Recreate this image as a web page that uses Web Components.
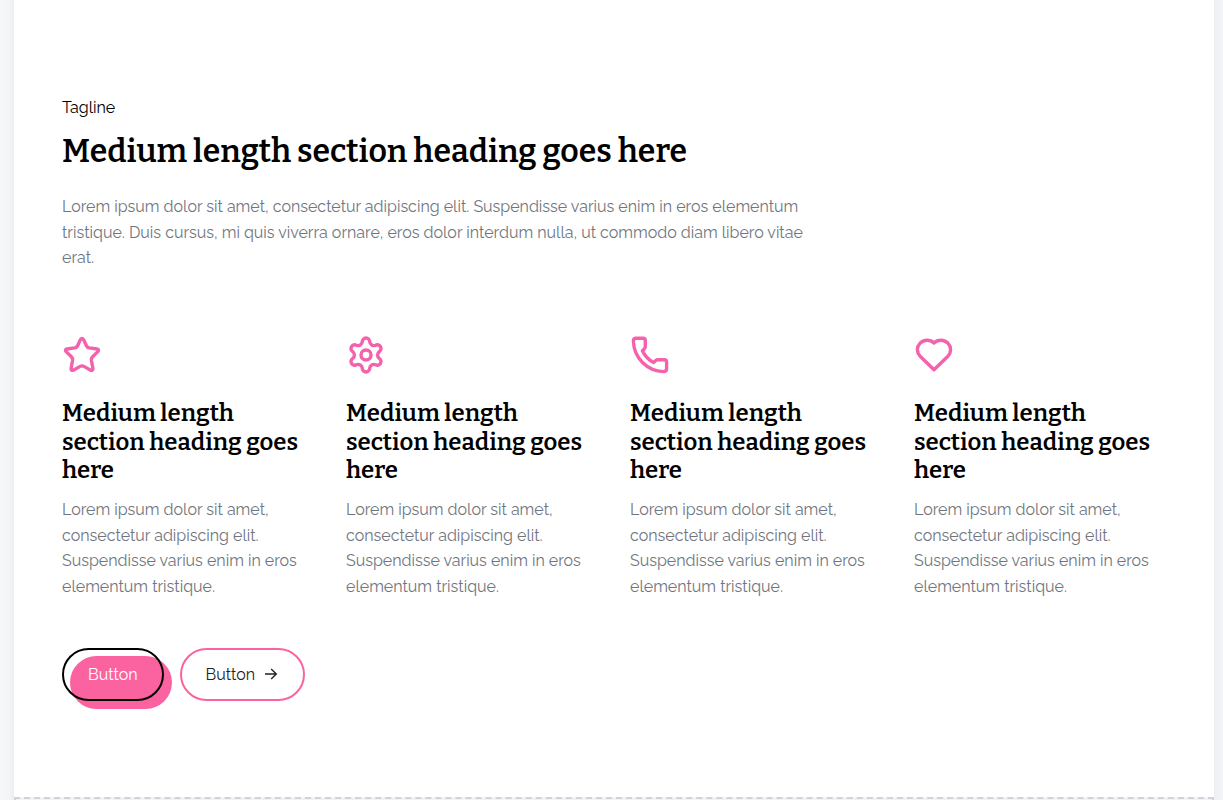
<!DOCTYPE html>
<html lang="en">
<head>
<meta charset="utf-8">
<title>Features</title>
<style>
  :root {
    --pink: #fa639f;
    --icon: #f461ac;
    --ink: #000;
    --muted: #70767e;
    --heading-font: Bitter, "DejaVu Serif Condensed", "DejaVu Serif", serif;
    --body-font: Raleway, Lato, sans-serif;
  }
  body { margin: 0; background: #f5f7f9; font: 16px/1.6 var(--body-font); color: var(--ink); }
</style>
</head>
<body>
<page-canvas>
  <feature-section>
    <section-intro>
      <span slot="tagline">Tagline</span>
      <span slot="heading">Medium length section heading goes here</span>
      Lorem ipsum dolor sit amet, consectetur adipiscing elit. Suspendisse varius enim in eros elementum tristique. Duis cursus, mi quis viverra ornare, eros dolor interdum nulla, ut commodo diam libero vitae erat.
    </section-intro>
    <feature-card slot="cards" icon="star"><span slot="heading">Medium length section heading goes here</span>Lorem ipsum dolor sit amet, consectetur adipiscing elit. Suspendisse varius enim in eros elementum tristique.</feature-card>
    <feature-card slot="cards" icon="gear"><span slot="heading">Medium length section heading goes here</span>Lorem ipsum dolor sit amet, consectetur adipiscing elit. Suspendisse varius enim in eros elementum tristique.</feature-card>
    <feature-card slot="cards" icon="phone"><span slot="heading">Medium length section heading goes here</span>Lorem ipsum dolor sit amet, consectetur adipiscing elit. Suspendisse varius enim in eros elementum tristique.</feature-card>
    <feature-card slot="cards" icon="heart"><span slot="heading">Medium length section heading goes here</span>Lorem ipsum dolor sit amet, consectetur adipiscing elit. Suspendisse varius enim in eros elementum tristique.</feature-card>
    <pill-button slot="actions" variant="primary">Button</pill-button>
    <pill-button slot="actions" variant="outline" arrow>Button</pill-button>
  </feature-section>
</page-canvas>
<script>
  class BaseElement extends HTMLElement {
    connectedCallback() {
      if (this.shadowRoot) return;
      this.attachShadow({ mode: 'open' }).innerHTML = this.render();
    }
  }

  customElements.define('page-canvas', class extends BaseElement {
    render() {
      return `<style>
        :host { display: grid; grid-template-columns: 14px minmax(0, 1fr) 9px; grid-template-rows: auto 1fr; height: 100vh; overflow: hidden; }
        .left { grid-row: 1 / 3; background: linear-gradient(to right, #f6f8fa, #f3f5f7 60%, #eceef1); }
        .right { grid-row: 1 / 3; grid-column: 3; background: linear-gradient(to right, #eeeff2, #f3f4f7); }
        main { background: #fff; }
        .drop { grid-column: 2; box-sizing: border-box; background: #f1f3f7; border: 2px dashed #d0d3d9; border-bottom: 0; }
      </style>
      <div class="left"></div><main><slot></slot></main><div class="right"></div><div class="drop"></div>`;
    }
  });

  customElements.define('feature-section', class extends BaseElement {
    render() {
      return `<style>
        :host { display: block; padding: 95px 48px 96px; }
        .cards { display: grid; grid-template-columns: repeat(4, minmax(0, 1fr)); gap: 32px; margin: 64px 0 48px; }
        .actions { display: flex; gap: 16px; }
      </style>
      <slot></slot>
      <div class="cards"><slot name="cards"></slot></div>
      <div class="actions"><slot name="actions"></slot></div>`;
    }
  });

  customElements.define('section-intro', class extends BaseElement {
    render() {
      return `<style>
        :host { display: block; max-width: 768px; }
        h2 { margin: 11px 0 24px; font: 600 32px/1.2 var(--heading-font); }
        p { margin: 0; color: var(--muted); }
      </style>
      <div><slot name="tagline"></slot></div>
      <h2><slot name="heading"></slot></h2>
      <p><slot></slot></p>`;
    }
  });

  const icons = {
    star: '<path d="M18.5 4.4Q20 2.3 21.5 4.4L24.4 10.7Q25.2 12.5 27.3 12.9L35 14Q37.6 14.6 35.9 16.6L30.6 21.8Q29.1 23.3 29.4 25.2L30.9 33.5Q31 36 28.6 35.2L22.4 31.6Q20 30.2 17.6 31.6L11.4 35.2Q9 36 9.1 33.5L10.6 25.2Q10.9 23.3 9.4 21.8L4.1 16.6Q2.4 14.6 5 14L12.7 12.9Q14.8 12.5 15.6 10.7Z"/>',
    gear: '<circle cx="20" cy="20" r="5"/><path d="M23.7 6.7A4.2 4.2 0 0 0 29.6 10.2A3.7 3.7 0 0 1 33.3 16.6A4.2 4.2 0 0 0 33.3 23.4A3.7 3.7 0 0 1 29.6 29.8A4.2 4.2 0 0 0 23.7 33.3A3.7 3.7 0 0 1 16.3 33.3A4.2 4.2 0 0 0 10.4 29.8A3.7 3.7 0 0 1 6.7 23.4A4.2 4.2 0 0 0 6.7 16.6A3.7 3.7 0 0 1 10.4 10.2A4.2 4.2 0 0 0 16.3 6.7A3.7 3.7 0 0 1 23.7 6.7Z"/>',
    phone: '<path d="M6 3.3H13Q15.3 3.3 15.3 5.6V11.6Q15.3 13 14.2 14L12.4 15.8C14.6 20.7 18.4 24.8 23.6 27.4L25.8 25.4Q26.6 24.7 28 24.7H34.2Q36.6 24.7 36.6 27V33.6Q36.6 36.6 33.6 36.6C17 36 4 23 3.4 6.2Q3.4 3.3 6 3.3Z"/>',
    heart: '<path d="M20 7.9C16 4.2 9.7 4.3 6.1 8.2C2.5 12.1 2.5 17.4 6.1 21.2L20 34.7L33.9 21.2C37.5 17.4 37.5 12.1 33.9 8.2C30.3 4.3 24 4.2 20 7.9Z"/>'
  };

  customElements.define('feature-card', class extends BaseElement {
    render() {
      return `<style>
        :host { display: block; }
        svg { display: block; width: 40px; height: 40px; fill: none; stroke: var(--icon); stroke-width: 3.4; stroke-linejoin: round; }
        h3 { margin: 24px 0 12px; font: 600 24px/1.2 var(--heading-font); }
        p { margin: 0; color: var(--muted); }
      </style>
      <svg viewBox="0 0 40 40" aria-hidden="true">${icons[this.getAttribute('icon')]}</svg>
      <h3><slot name="heading"></slot></h3>
      <p><slot></slot></p>`;
    }
  });

  customElements.define('pill-button', class extends BaseElement {
    render() {
      const arrow = this.hasAttribute('arrow')
        ? '<svg viewBox="0 0 16 16" aria-hidden="true"><path d="M2 8H13.3M8.2 2.9L13.3 8L8.2 13.1"/></svg>' : '';
      return `<style>
        :host { display: block; position: relative; z-index: 0; }
        button { display: flex; align-items: center; gap: 8px; padding: 12px 24px; border: 2px solid var(--pink); border-radius: 27px; background: none; color: #222; font: inherit; cursor: pointer; }
        :host([variant="primary"]) button { border-color: #000; color: #fff; }
        :host([variant="primary"])::before { content: ""; position: absolute; z-index: -1; inset: 8px -8px -8px 8px; border-radius: 27px; background: var(--pink); }
        svg { width: 16px; height: 16px; fill: none; stroke: #222; stroke-width: 1.4; }
      </style>
      <button type="button"><slot></slot>${arrow}</button>`;
    }
  });
</script>
</body>
</html>
